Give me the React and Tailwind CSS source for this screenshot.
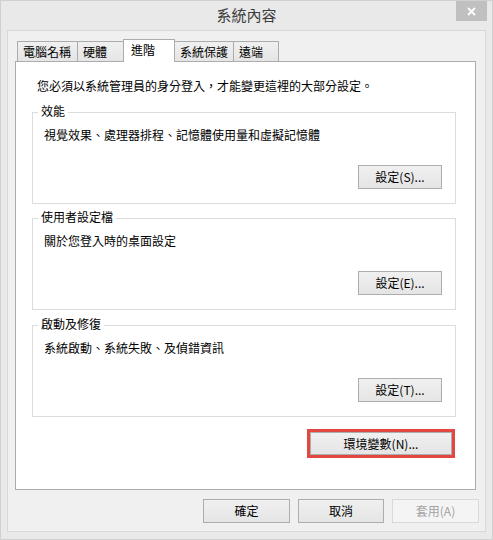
import React from 'react';

const font = "font-['Noto_Sans_CJK_TC','Microsoft_JhengHei',sans-serif]";

function WinButton({ children, className = '', disabled = false }) {
  return (
    <button
      className={`flex items-center justify-center border text-[12px] leading-none ${
        disabled
          ? 'border-[#d9d9d9] bg-[#f4f4f4] text-[#a3a3a3]'
          : 'border-[#adadad] bg-gradient-to-b from-[#f0f0f0] to-[#e5e5e5] text-black'
      } ${className}`}
    >
      {children}
    </button>
  );
}

function GroupBox({ label, text, button, className = '' }) {
  return (
    <div className={`relative flex h-[92px] flex-col border border-[#dcdcdc] pl-[11px] pr-[13px] pt-[14px] pb-[14px] ${className}`}>
      <span className="absolute -top-[10px] left-[5px] bg-white px-[3px] text-[12px] leading-[16px] text-black">
        {label}
      </span>
      <p className="text-[12px] leading-[16px] text-black">{text}</p>
      <div className="mt-auto flex justify-end">
        <WinButton className="h-[24px] w-[84px]">{button}</WinButton>
      </div>
    </div>
  );
}

const tabs = [
  { name: '電腦名稱', w: 'w-[61px]' },
  { name: '硬體', w: 'w-[47px]' },
  { name: '進階', w: 'w-[52px]', active: true },
  { name: '系統保護', w: 'w-[60px]' },
  { name: '遠端', w: 'w-[46px]' },
];

export default function App() {
  return (
    <div className={`flex h-[540px] w-[493px] flex-col border border-[#d0d0d0] bg-[#e9e9e9] ${font}`}>
      {/* title bar */}
      <div className="relative flex h-[29px] shrink-0 items-center justify-center pb-[2px]">
        <span className="text-[15px] leading-none text-[#3c3c3c]">系統內容</span>
        <div className="absolute right-[5px] top-0 flex h-[20px] w-[31px] items-center justify-center bg-[#c0c0c0]">
          <svg width="9" height="9" viewBox="0 0 9 9">
            <path d="M1 1 L8 8 M8 1 L1 8" stroke="white" strokeWidth="1.8" />
          </svg>
        </div>
      </div>

      {/* client area */}
      <div className="mx-[6px] mb-[7px] flex flex-1 flex-col border border-[#d8d8d8] bg-[#f0f0f0] pl-[7px] pr-[9px] pt-[8px]">
        {/* tabs */}
        <div className="flex h-[22px] items-end pl-[2px]">
          {tabs.map((t, i) =>
            t.active ? (
              <div
                key={t.name}
                className={`relative z-10 -mb-px -ml-px flex h-[23px] ${t.w} items-start border border-b-0 border-[#acacac] bg-white pl-[7px] pt-[2px] text-[12px] leading-[16px] text-black`}
              >
                {t.name}
              </div>
            ) : (
              <div
                key={t.name}
                className={`flex h-[20px] ${t.w} ${i > 0 ? '-ml-px' : ''} items-center border border-b-0 border-[#acacac] bg-gradient-to-b from-[#f0f0f0] to-[#e5e5e5] pl-[5px] text-[12px] leading-[16px] text-black`}
              >
                {t.name}
              </div>
            )
          )}
        </div>

        {/* panel */}
        <div className="flex h-[429px] flex-col border border-[#acacac] bg-white pl-[16px] pr-[19px] pt-[16px]">
          <p className="ml-[5px] text-[12px] leading-[16px] text-black">
            您必須以系統管理員的身分登入，才能變更這裡的大部分設定。
          </p>

          <GroupBox
            className="mt-[18px]"
            label="效能"
            text="視覺效果、處理器排程、記憶體使用量和虛擬記憶體"
            button="設定(S)..."
          />
          <GroupBox
            className="mt-[14px]"
            label="使用者設定檔"
            text="關於您登入時的桌面設定"
            button="設定(E)..."
          />
          <GroupBox
            className="mt-[15px]"
            label="啟動及修復"
            text="系統啟動、系統失敗、及偵錯資訊"
            button="設定(T)..."
          />

          <div className="mt-[12px] flex justify-end pr-px">
            <div className="border-[3px] border-[#e2483f]">
              <WinButton className="h-[23px] w-[142px]">環境變數(N)...</WinButton>
            </div>
          </div>
        </div>

        {/* dialog buttons */}
        <div className="-mr-[3px] mt-[9px] flex justify-end gap-[8px]">
          <WinButton className="h-[24px] w-[87px]">確定</WinButton>
          <WinButton className="h-[24px] w-[86px]">取消</WinButton>
          <WinButton className="h-[24px] w-[87px]" disabled>
            套用(A)
          </WinButton>
        </div>
      </div>
    </div>
  );
}
